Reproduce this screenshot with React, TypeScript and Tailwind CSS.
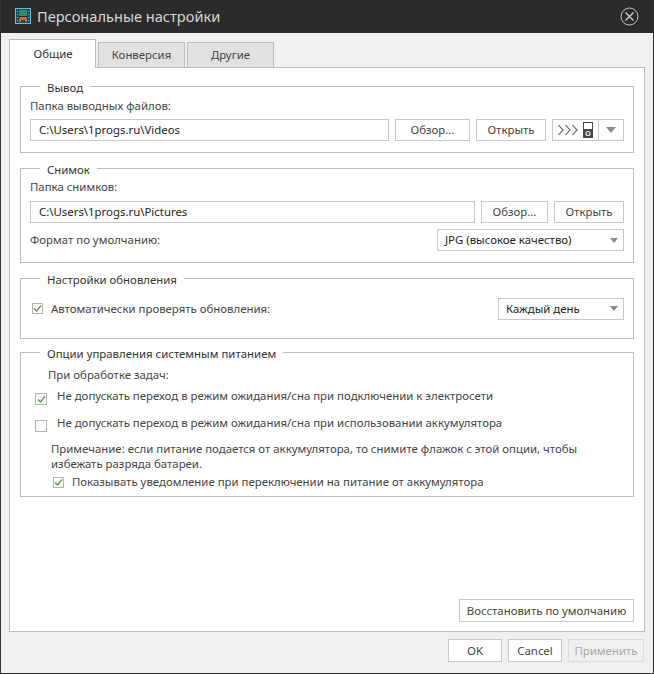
import type { ReactNode } from 'react';

const font = { fontFamily: '"Noto Sans", "Open Sans", sans-serif' };

function Group({ title, className, inner, children }: { title: string; className: string; inner: string; children: ReactNode }) {
  return (
    <fieldset className={`w-[614px] border border-[#bdbdbd] ${className}`}>
      <legend className="ml-[19px] px-[7px] pt-[2px] text-[11.4px] leading-[9px] text-[#333]">{title}</legend>
      <div className={inner}>{children}</div>
    </fieldset>
  );
}

function Btn({ children, className = '' }: { children: ReactNode; className?: string }) {
  return (
    <div className={`flex items-center justify-center border border-[#c8c8c8] bg-white text-[11.4px] text-[#444] ${className}`}>
      {children}
    </div>
  );
}

function Field({ value, className }: { value: string; className: string }) {
  return (
    <div className={`flex items-center border border-[#c8c8c8] bg-white pl-2 text-[11.4px] text-[#222] ${className}`}>{value}</div>
  );
}

function Select({ value, className }: { value: string; className: string }) {
  return (
    <div className={`flex items-center justify-between border border-[#c8c8c8] bg-white pl-[7px] pr-[5px] text-[11.4px] text-[#222] ${className}`}>
      <span>{value}</span>
      <svg width="8" height="5" viewBox="0 0 8 5">
        <path d="M0 0h8L4 5z" fill="#8a8a8a" />
      </svg>
    </div>
  );
}

function Check({ checked = false, className = 'h-[11px] w-[11px]' }: { checked?: boolean; className?: string }) {
  return (
    <div className={`flex shrink-0 items-center justify-center border border-[#b4b4b4] bg-[#fdfdfd] ${className}`}>
      {checked && (
        <svg width="9" height="9" viewBox="0 0 9 9">
          <path d="M1 4.5 3.5 7 8 1.5" fill="none" stroke="#5b9a4c" strokeWidth="1.4" />
        </svg>
      )}
    </div>
  );
}

function AppIcon() {
  return (
    <svg width="16" height="16" viewBox="0 0 16 16" className="ml-[15px]">
      <rect width="16" height="16" fill="#5cc8e6" />
      <rect x="1" y="1" width="14" height="14" fill="#1d4a55" />
      <rect x="4" y="2" width="8" height="6" fill="#2f8a72" />
      <rect x="4" y="8" width="8" height="1" fill="#16303a" />
      <path d="M4 14v-3l1-2h6l1 2v3h-2v-2H6v2z" fill="#e2622a" />
      <path d="M2 3h1v1H2zM2 6h1v1H2zM2 9h1v1H2zM2 12h1v1H2zM13 3h1v1h-1zM13 6h1v1h-1zM13 9h1v1h-1zM13 12h1v1h-1z" fill="#5cc8e6" />
    </svg>
  );
}

function CloseIcon() {
  return (
    <svg width="19" height="19" viewBox="0 0 19 19" className="mr-[15px]">
      <circle cx="9.5" cy="9.5" r="8.5" fill="none" stroke="#c4c4c4" strokeWidth="1" />
      <path d="M5.5 5.5l8 8M13.5 5.5l-8 8" stroke="#d8d8d8" strokeWidth="1.1" />
    </svg>
  );
}

function DeviceIcon() {
  return (
    <svg width="36" height="16" viewBox="0 0 36 16">
      <path d="M.5 3l4.5 5-4.5 5M7.5 3l4.5 5-4.5 5M14.5 3l4.5 5-4.5 5" fill="none" stroke="#555" strokeWidth="1.1" />
      <rect x="25.5" y=".5" width="9" height="15" fill="#fff" stroke="#44474d" />
      <rect x="25" y="7" width="10" height="9" fill="#44474d" />
      <circle cx="30" cy="11.5" r="2" fill="none" stroke="#e8e8e8" strokeWidth="1.2" />
    </svg>
  );
}

export default function App() {
  return (
    <div style={font} className="flex h-[674px] w-[654px] flex-col overflow-hidden border-x border-b border-[#333] bg-[#f0f0f0]">
      <div className="-mx-px flex h-[33px] shrink-0 items-center justify-between bg-[#2b2b2b]">
        <div className="flex items-center">
          <AppIcon />
          <span className="ml-[6px] text-[14.6px] text-[#d6d6d6]">Персональные настройки</span>
        </div>
        <CloseIcon />
      </div>

      <div className="ml-[8px] mt-[6px] flex h-[28px] items-end text-[11.4px]">
        <div className="z-10 -mb-px flex h-[29px] w-[87px] items-center justify-center border border-b-0 border-[#bdbdbd] bg-white pl-px text-[#333]">Общие</div>
        <div className="ml-[2px] flex h-[25px] w-[87px] items-center justify-center border border-b-0 border-[#bdbdbd] bg-[#e1e1e1] text-[#444]">Конверсия</div>
        <div className="ml-[2px] flex h-[25px] w-[87px] items-center justify-center border border-b-0 border-[#bdbdbd] bg-[#e1e1e1] text-[#444]">Другие</div>
      </div>

      <div className="ml-[8px] flex h-[565px] w-[636px] flex-col border border-[#bdbdbd] bg-white px-[10px] pt-[13px]">
        <Group title="Вывод" className="h-[72px]" inner="pl-[9px] pr-[9px]">
          <div className="mt-[6px] text-[11.4px] leading-[16px] text-[#444]">Папка выводных файлов:</div>
          <div className="mt-[5px] flex h-[22px] items-stretch">
            <Field value="C:\Users\1progs.ru\Videos" className="w-[359px]" />
            <Btn className="ml-[6px] w-[75px]">Обзор...</Btn>
            <Btn className="ml-[6px] w-[70px]">Открыть</Btn>
            <div className="ml-[6px] flex w-[72px] border border-[#c8c8c8]">
              <div className="flex w-[46px] items-center justify-center border-r border-[#c8c8c8]"><DeviceIcon /></div>
              <div className="flex flex-1 items-center justify-center">
                <svg width="10" height="6" viewBox="0 0 10 6">
                  <path d="M0 0h10L5 6z" fill="#8a8a8a" />
                </svg>
              </div>
            </div>
          </div>
        </Group>

        <Group title="Снимок" className="mt-[10px] h-[100px]" inner="pl-[9px] pr-[9px]">
          <div className="mt-[5px] text-[11.4px] leading-[16px] text-[#444]">Папка снимков:</div>
          <div className="mt-[6px] flex h-[22px] items-stretch">
            <Field value="C:\Users\1progs.ru\Pictures" className="w-[445px]" />
            <Btn className="ml-[6px] w-[67px]">Обзор...</Btn>
            <Btn className="ml-[6px] w-[70px]">Открыть</Btn>
          </div>
          <div className="mt-[6px] flex h-[22px] items-center justify-between">
            <span className="text-[11.4px] text-[#444]">Формат по умолчанию:</span>
            <Select value="JPG (высокое качество)" className="h-[22px] w-[187px]" />
          </div>
        </Group>

        <Group title="Настройки обновления" className="mt-[10px] h-[66px]" inner="pl-[11px] pr-[9px]">
          <div className="mt-[13px] flex h-[23px] items-center">
            <Check checked />
            <span className="ml-[8px] flex-1 text-[11.4px] text-[#444]">Автоматически проверять обновления:</span>
            <Select value="Каждый день" className="h-[22px] w-[126px]" />
          </div>
        </Group>

        <Group title="Опции управления системным питанием" className="mt-[8px] h-[150px]" inner="pl-[14px] pr-[10px]">
          <div className="ml-[13px] mt-[9px] text-[11.4px] leading-[16px] text-[#444]">При обработке задач:</div>
          <div className="mt-[4px] flex items-start">
            <Check checked className="mt-[6px] h-[12px] w-[12px]" />
            <span className="ml-[10px] text-[11.4px] leading-[18px] text-[#444]">Не допускать переход в режим ожидания/сна при подключении к электросети</span>
          </div>
          <div className="mt-[9px] flex items-start">
            <Check className="mt-[6px] h-[12px] w-[12px]" />
            <span className="ml-[10px] text-[11.4px] leading-[18px] text-[#444]">Не допускать переход в режим ожидания/сна при использовании аккумулятора</span>
          </div>
          <p className="ml-[16px] mt-[9px] w-[550px] text-[11.4px] leading-[15px] text-[#444]">
            Примечание: если питание подается от аккумулятора, то снимите флажок с этой опции, чтобы избежать разряда батареи.
          </p>
          <div className="ml-[18px] mt-[2px] flex items-center">
            <Check checked />
            <span className="ml-[8px] text-[11.4px] leading-[18px] text-[#444]">Показывать уведомление при переключении на питание от аккумулятора</span>
          </div>
        </Group>

        <div className="mb-[9px] mt-auto flex justify-end">
          <Btn className="h-[23px] w-[175px]">Восстановить по умолчанию</Btn>
        </div>
      </div>

      <div className="mt-[7px] flex justify-end gap-[6px] pr-[9px]">
        <Btn className="h-[23px] w-[54px] border-[#5a93c8]">OK</Btn>
        <Btn className="h-[23px] w-[54px]">Cancel</Btn>
        <div className="flex h-[23px] w-[76px] items-center justify-center border border-[#dcdcdc] bg-[#f0f0f0] text-[11.4px] text-[#a8a8a8]">Применить</div>
      </div>
    </div>
  );
}
